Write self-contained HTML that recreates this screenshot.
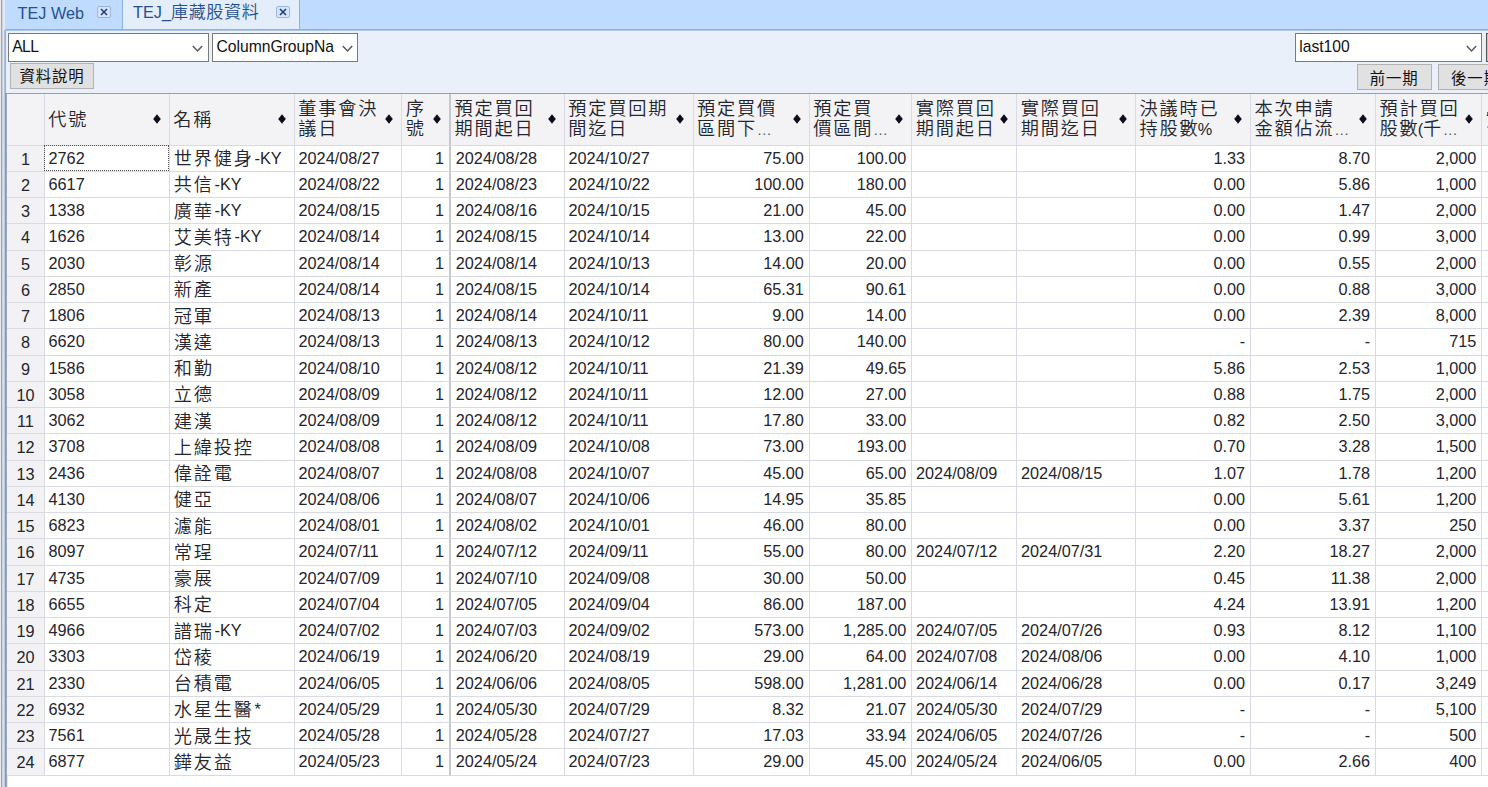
<!DOCTYPE html><html><head><meta charset="utf-8"><title>TEJ</title><style>

html,body{margin:0;padding:0;}
body{width:1488px;height:787px;overflow:hidden;background:#fff;position:relative;font-family:"Liberation Sans", "Noto Sans CJK TC", sans-serif;font-size:16.25px;color:#25252d;}
div{box-sizing:border-box;}
.abs{position:absolute;}
.c{font-family:"Liberation Sans", "Noto Sans CJK TC", sans-serif;font-size:18.2px;letter-spacing:1.8px;}
.cell{position:absolute;height:26.25px;line-height:24.5px;white-space:nowrap;overflow:hidden;border-right:1.25px solid #d9dae3;border-bottom:1.25px solid #d9dae3;background:#fff;padding:0 5px 0 3.7px;}
.cell .c{line-height:20px;position:relative;top:1.7px;margin-left:0.3px;margin-right:0.7px;font-weight:350;}
.r{text-align:right;}
.rh{background:#f2f2f5;text-align:center;padding:1px 0 0 0;}
.hd{position:absolute;background:#f3f3f6;border-right:1.25px solid #d9dae3;border-bottom:1.25px solid #d9dae3;overflow:hidden;}
.hd .t{position:absolute;left:3.4px;top:50%;margin-top:-0.6px;transform:translateY(-50%);line-height:20px;font-size:16.25px;white-space:nowrap;}
.hd .t .c{font-weight:350;font-size:18.2px;letter-spacing:1.8px;position:relative;top:0.4px;margin-right:-1.8px;}
.e{font-size:15px;margin-left:1.5px;color:#555;}
.hd svg{position:absolute;right:8.3px;top:50%;margin-top:-5px;}
.sel{position:absolute;background:#fff;border:1.25px solid #7a7a7a;height:29px;line-height:25.5px;padding-left:3.2px;font-size:15.7px;color:#111;}
.sel svg{position:absolute;right:4.5px;top:10.8px;}
.btn{position:absolute;background:#e1e1e1;border:1.25px solid #b2b2b2;height:25.5px;line-height:26.5px;text-align:center;font-size:15.4px;letter-spacing:0.9px;color:#111;white-space:nowrap;overflow:hidden;}
.tab{position:absolute;top:0;height:29px;line-height:24px;color:#27508f;font-size:16.25px;white-space:nowrap;}
.tab .c{font-size:17px;letter-spacing:0.7px;font-weight:350;}
.x{position:absolute;top:5.6px;width:14.2px;height:12.9px;border:1.25px solid #9db7e0;border-radius:2px;background:#d6e4fb;}
.x svg{position:absolute;left:2.2px;top:1.6px;}

</style></head><body>
<div class="abs" style="left:0px;top:0;width:1px;height:787px;background:#e6ebf0"></div>
<div class="abs" style="left:1px;top:0;width:1px;height:787px;background:#a1a3a9"></div>
<div class="abs" style="left:2px;top:0;width:1px;height:787px;background:#d0d1d9"></div>
<div class="abs" style="left:3px;top:0;width:1px;height:787px;background:#e3e6f0"></div>
<div class="abs" style="left:4px;top:0;width:1px;height:787px;background:#e6e8f0"></div>
<div class="abs" style="left:5px;top:0;width:1483px;height:29px;background:#bfdbff"></div>
<div class="abs" style="left:5px;top:31px;width:1483px;height:63px;background:linear-gradient(#e6f2fc 0px,#e9f0f9 3px)"></div>
<div class="abs" style="left:3px;top:30px;width:1px;height:63px;background:#dbe1ee"></div>
<div class="abs" style="left:4px;top:30px;width:1px;height:63px;background:#b3c5e2"></div>
<div class="abs" style="left:5px;top:30px;width:1px;height:63px;background:#93adcf"></div>
<div class="abs" style="left:6px;top:30px;width:1px;height:63px;background:#e3f0fc"></div>
<div class="abs" style="left:3px;top:93px;width:1px;height:694px;background:#d8dfee"></div>
<div class="abs" style="left:4px;top:93px;width:1px;height:694px;background:#b9cbe6"></div>
<div class="abs" style="left:5px;top:93px;width:1px;height:694px;background:#8298b6"></div>
<div class="abs" style="left:6px;top:93px;width:1px;height:694px;background:#a0a9bd"></div>
<div class="abs" style="left:7px;top:93px;width:1px;height:694px;background:#e4e5eb"></div>
<div class="tab" style="left:5px;width:117.5px;border-right:1.25px solid #8db2e3"><span style="position:absolute;left:12.5px;top:1px">TEJ Web</span><div class="x" style="left:92.3px"><svg width="8" height="8" viewBox="0 0 8 8"><path d="M1 1L7 7M7 1L1 7" stroke="#1f3f86" stroke-width="1.6" fill="none"/></svg></div></div>
<div class="tab" style="left:122.5px;width:177px;background:#e4edfa;border-right:1.25px solid #8db2e3"><span style="position:absolute;left:10.5px">TEJ_<span class="c">庫藏股資料</span></span><div class="x" style="left:153px"><svg width="8" height="8" viewBox="0 0 8 8"><path d="M1 1L7 7M7 1L1 7" stroke="#1f3f86" stroke-width="1.6" fill="none"/></svg></div></div>
<div class="abs" style="left:5px;top:29px;width:1483px;height:1px;background:#93b0d8"></div><div class="abs" style="left:5px;top:30px;width:1483px;height:1px;background:#aec4e0"></div>
<div class="sel" style="left:8px;top:33px;width:200.5px"><span style="letter-spacing:-0.6px">ALL</span><svg width="11" height="8" viewBox="0 0 11 8"><path d="M0.8 1L5.5 6L10.2 1" stroke="#5a5a5a" stroke-width="1.5" fill="none"/></svg></div>
<div class="sel" style="left:212.2px;top:33px;width:146.3px">ColumnGroupNa<svg width="11" height="8" viewBox="0 0 11 8"><path d="M0.8 1L5.5 6L10.2 1" stroke="#5a5a5a" stroke-width="1.5" fill="none"/></svg></div>
<div class="sel" style="left:1295px;top:33px;width:187.3px">last100<svg width="11" height="8" viewBox="0 0 11 8"><path d="M0.8 1L5.5 6L10.2 1" stroke="#5a5a5a" stroke-width="1.5" fill="none"/></svg></div>
<div class="abs" style="left:1485.5px;top:32.8px;width:10px;height:29px;border:1.25px solid #555;background:#c4c4cb"></div>
<div class="btn" style="left:9.8px;top:63.2px;width:84.4px">資料說明</div>
<div class="btn" style="left:1356.5px;top:64.4px;width:75.3px;height:25.8px;line-height:27px">前一期</div>
<div class="btn" style="left:1437.5px;top:64.4px;width:76px;height:25.8px;line-height:27px">後一期</div>
<div class="abs" style="left:6.25px;top:92.6px;width:1482px;height:1.25px;background:#9c9ea6"></div>
<div class="hd" style="left:7.00px;top:93.75px;width:37.85px;height:51.75px"></div>
<div class="hd" style="left:44.85px;top:93.75px;width:125.00px;height:51.75px;"><div class="t" style="margin-top:0.6px"><span class="c">代號</span></div><svg width="8" height="10" viewBox="0 0 8 10"><polygon points="4,0.3 7.8,5 4,9.7 0.2,5" fill="#0b0b1a"/></svg></div>
<div class="hd" style="left:169.85px;top:93.75px;width:125.00px;height:51.75px;"><div class="t" style="margin-top:0.6px"><span class="c">名稱</span></div><svg width="8" height="10" viewBox="0 0 8 10"><polygon points="4,0.3 7.8,5 4,9.7 0.2,5" fill="#0b0b1a"/></svg></div>
<div class="hd" style="left:294.85px;top:93.75px;width:107.50px;height:51.75px;"><div class="t"><span class="c">董事會決</span><br><span class="c">議日</span></div><svg width="8" height="10" viewBox="0 0 8 10"><polygon points="4,0.3 7.8,5 4,9.7 0.2,5" fill="#0b0b1a"/></svg></div>
<div class="hd" style="left:402.35px;top:93.75px;width:48.75px;height:51.75px;border-right:2.5px solid #c6c7cf;"><div class="t"><span class="c">序</span><br><span class="c">號</span></div><svg width="8" height="10" viewBox="0 0 8 10"><polygon points="4,0.3 7.8,5 4,9.7 0.2,5" fill="#0b0b1a"/></svg></div>
<div class="hd" style="left:451.10px;top:93.75px;width:113.75px;height:51.75px;"><div class="t"><span class="c">預定買回</span><br><span class="c">期間起日</span></div><svg width="8" height="10" viewBox="0 0 8 10"><polygon points="4,0.3 7.8,5 4,9.7 0.2,5" fill="#0b0b1a"/></svg></div>
<div class="hd" style="left:564.85px;top:93.75px;width:128.75px;height:51.75px;"><div class="t"><span class="c">預定買回期</span><br><span class="c">間迄日</span></div><svg width="8" height="10" viewBox="0 0 8 10"><polygon points="4,0.3 7.8,5 4,9.7 0.2,5" fill="#0b0b1a"/></svg></div>
<div class="hd" style="left:693.60px;top:93.75px;width:116.25px;height:51.75px;"><div class="t"><span class="c">預定買價</span><br><span class="c">區間下</span><span class="e">…</span></div><svg width="8" height="10" viewBox="0 0 8 10"><polygon points="4,0.3 7.8,5 4,9.7 0.2,5" fill="#0b0b1a"/></svg></div>
<div class="hd" style="left:809.85px;top:93.75px;width:102.50px;height:51.75px;"><div class="t"><span class="c">預定買</span><br><span class="c">價區間</span><span class="e">…</span></div><svg width="8" height="10" viewBox="0 0 8 10"><polygon points="4,0.3 7.8,5 4,9.7 0.2,5" fill="#0b0b1a"/></svg></div>
<div class="hd" style="left:912.35px;top:93.75px;width:105.00px;height:51.75px;"><div class="t"><span class="c">實際買回</span><br><span class="c">期間起日</span></div><svg width="8" height="10" viewBox="0 0 8 10"><polygon points="4,0.3 7.8,5 4,9.7 0.2,5" fill="#0b0b1a"/></svg></div>
<div class="hd" style="left:1017.35px;top:93.75px;width:118.75px;height:51.75px;"><div class="t"><span class="c">實際買回</span><br><span class="c">期間迄日</span></div><svg width="8" height="10" viewBox="0 0 8 10"><polygon points="4,0.3 7.8,5 4,9.7 0.2,5" fill="#0b0b1a"/></svg></div>
<div class="hd" style="left:1136.10px;top:93.75px;width:115.00px;height:51.75px;"><div class="t"><span class="c">決議時已</span><br><span class="c">持股數</span>%</div><svg width="8" height="10" viewBox="0 0 8 10"><polygon points="4,0.3 7.8,5 4,9.7 0.2,5" fill="#0b0b1a"/></svg></div>
<div class="hd" style="left:1251.10px;top:93.75px;width:125.00px;height:51.75px;"><div class="t"><span class="c">本次申請</span><br><span class="c">金額佔流</span><span class="e">…</span></div><svg width="8" height="10" viewBox="0 0 8 10"><polygon points="4,0.3 7.8,5 4,9.7 0.2,5" fill="#0b0b1a"/></svg></div>
<div class="hd" style="left:1376.10px;top:93.75px;width:106.25px;height:51.75px;"><div class="t"><span class="c">預計買回</span><br><span class="c">股數</span>(<span class="c">千</span><span class="e">…</span></div><svg width="8" height="10" viewBox="0 0 8 10"><polygon points="4,0.3 7.8,5 4,9.7 0.2,5" fill="#0b0b1a"/></svg></div>
<div class="hd" style="left:1482.35px;top:93.75px;width:131.25px;height:51.75px;"><div class="t" style="margin-top:0.6px"><span class="c">實</span></div><svg width="8" height="10" viewBox="0 0 8 10"><polygon points="4,0.3 7.8,5 4,9.7 0.2,5" fill="#0b0b1a"/></svg></div>
<div class="cell rh" style="left:7.00px;top:145.50px;width:37.85px">1</div>
<div class="cell" style="left:44.85px;top:145.50px;width:125.00px;">2762</div>
<div class="cell" style="left:169.85px;top:145.50px;width:125.00px;"><span class="c">世界健身</span>-KY</div>
<div class="cell" style="left:294.85px;top:145.50px;width:107.50px;">2024/08/27</div>
<div class="cell r" style="left:402.35px;top:145.50px;width:48.75px;border-right:2.5px solid #c6c7cf;">1</div>
<div class="cell" style="left:451.10px;top:145.50px;width:113.75px;padding-left:4.7px;">2024/08/28</div>
<div class="cell" style="left:564.85px;top:145.50px;width:128.75px;">2024/10/27</div>
<div class="cell r" style="left:693.60px;top:145.50px;width:116.25px;">75.00</div>
<div class="cell r" style="left:809.85px;top:145.50px;width:102.50px;">100.00</div>
<div class="cell" style="left:912.35px;top:145.50px;width:105.00px;"></div>
<div class="cell" style="left:1017.35px;top:145.50px;width:118.75px;"></div>
<div class="cell r" style="left:1136.10px;top:145.50px;width:115.00px;">1.33</div>
<div class="cell r" style="left:1251.10px;top:145.50px;width:125.00px;">8.70</div>
<div class="cell r" style="left:1376.10px;top:145.50px;width:106.25px;">2,000</div>
<div class="cell" style="left:1482.35px;top:145.50px;width:100.00px"></div>
<div class="cell rh" style="left:7.00px;top:171.75px;width:37.85px">2</div>
<div class="cell" style="left:44.85px;top:171.75px;width:125.00px;">6617</div>
<div class="cell" style="left:169.85px;top:171.75px;width:125.00px;"><span class="c">共信</span>-KY</div>
<div class="cell" style="left:294.85px;top:171.75px;width:107.50px;">2024/08/22</div>
<div class="cell r" style="left:402.35px;top:171.75px;width:48.75px;border-right:2.5px solid #c6c7cf;">1</div>
<div class="cell" style="left:451.10px;top:171.75px;width:113.75px;padding-left:4.7px;">2024/08/23</div>
<div class="cell" style="left:564.85px;top:171.75px;width:128.75px;">2024/10/22</div>
<div class="cell r" style="left:693.60px;top:171.75px;width:116.25px;">100.00</div>
<div class="cell r" style="left:809.85px;top:171.75px;width:102.50px;">180.00</div>
<div class="cell" style="left:912.35px;top:171.75px;width:105.00px;"></div>
<div class="cell" style="left:1017.35px;top:171.75px;width:118.75px;"></div>
<div class="cell r" style="left:1136.10px;top:171.75px;width:115.00px;">0.00</div>
<div class="cell r" style="left:1251.10px;top:171.75px;width:125.00px;">5.86</div>
<div class="cell r" style="left:1376.10px;top:171.75px;width:106.25px;">1,000</div>
<div class="cell" style="left:1482.35px;top:171.75px;width:100.00px"></div>
<div class="cell rh" style="left:7.00px;top:198.00px;width:37.85px">3</div>
<div class="cell" style="left:44.85px;top:198.00px;width:125.00px;">1338</div>
<div class="cell" style="left:169.85px;top:198.00px;width:125.00px;"><span class="c">廣華</span>-KY</div>
<div class="cell" style="left:294.85px;top:198.00px;width:107.50px;">2024/08/15</div>
<div class="cell r" style="left:402.35px;top:198.00px;width:48.75px;border-right:2.5px solid #c6c7cf;">1</div>
<div class="cell" style="left:451.10px;top:198.00px;width:113.75px;padding-left:4.7px;">2024/08/16</div>
<div class="cell" style="left:564.85px;top:198.00px;width:128.75px;">2024/10/15</div>
<div class="cell r" style="left:693.60px;top:198.00px;width:116.25px;">21.00</div>
<div class="cell r" style="left:809.85px;top:198.00px;width:102.50px;">45.00</div>
<div class="cell" style="left:912.35px;top:198.00px;width:105.00px;"></div>
<div class="cell" style="left:1017.35px;top:198.00px;width:118.75px;"></div>
<div class="cell r" style="left:1136.10px;top:198.00px;width:115.00px;">0.00</div>
<div class="cell r" style="left:1251.10px;top:198.00px;width:125.00px;">1.47</div>
<div class="cell r" style="left:1376.10px;top:198.00px;width:106.25px;">2,000</div>
<div class="cell" style="left:1482.35px;top:198.00px;width:100.00px"></div>
<div class="cell rh" style="left:7.00px;top:224.25px;width:37.85px">4</div>
<div class="cell" style="left:44.85px;top:224.25px;width:125.00px;">1626</div>
<div class="cell" style="left:169.85px;top:224.25px;width:125.00px;"><span class="c">艾美特</span>-KY</div>
<div class="cell" style="left:294.85px;top:224.25px;width:107.50px;">2024/08/14</div>
<div class="cell r" style="left:402.35px;top:224.25px;width:48.75px;border-right:2.5px solid #c6c7cf;">1</div>
<div class="cell" style="left:451.10px;top:224.25px;width:113.75px;padding-left:4.7px;">2024/08/15</div>
<div class="cell" style="left:564.85px;top:224.25px;width:128.75px;">2024/10/14</div>
<div class="cell r" style="left:693.60px;top:224.25px;width:116.25px;">13.00</div>
<div class="cell r" style="left:809.85px;top:224.25px;width:102.50px;">22.00</div>
<div class="cell" style="left:912.35px;top:224.25px;width:105.00px;"></div>
<div class="cell" style="left:1017.35px;top:224.25px;width:118.75px;"></div>
<div class="cell r" style="left:1136.10px;top:224.25px;width:115.00px;">0.00</div>
<div class="cell r" style="left:1251.10px;top:224.25px;width:125.00px;">0.99</div>
<div class="cell r" style="left:1376.10px;top:224.25px;width:106.25px;">3,000</div>
<div class="cell" style="left:1482.35px;top:224.25px;width:100.00px"></div>
<div class="cell rh" style="left:7.00px;top:250.50px;width:37.85px">5</div>
<div class="cell" style="left:44.85px;top:250.50px;width:125.00px;">2030</div>
<div class="cell" style="left:169.85px;top:250.50px;width:125.00px;"><span class="c">彰源</span></div>
<div class="cell" style="left:294.85px;top:250.50px;width:107.50px;">2024/08/14</div>
<div class="cell r" style="left:402.35px;top:250.50px;width:48.75px;border-right:2.5px solid #c6c7cf;">1</div>
<div class="cell" style="left:451.10px;top:250.50px;width:113.75px;padding-left:4.7px;">2024/08/14</div>
<div class="cell" style="left:564.85px;top:250.50px;width:128.75px;">2024/10/13</div>
<div class="cell r" style="left:693.60px;top:250.50px;width:116.25px;">14.00</div>
<div class="cell r" style="left:809.85px;top:250.50px;width:102.50px;">20.00</div>
<div class="cell" style="left:912.35px;top:250.50px;width:105.00px;"></div>
<div class="cell" style="left:1017.35px;top:250.50px;width:118.75px;"></div>
<div class="cell r" style="left:1136.10px;top:250.50px;width:115.00px;">0.00</div>
<div class="cell r" style="left:1251.10px;top:250.50px;width:125.00px;">0.55</div>
<div class="cell r" style="left:1376.10px;top:250.50px;width:106.25px;">2,000</div>
<div class="cell" style="left:1482.35px;top:250.50px;width:100.00px"></div>
<div class="cell rh" style="left:7.00px;top:276.75px;width:37.85px">6</div>
<div class="cell" style="left:44.85px;top:276.75px;width:125.00px;">2850</div>
<div class="cell" style="left:169.85px;top:276.75px;width:125.00px;"><span class="c">新產</span></div>
<div class="cell" style="left:294.85px;top:276.75px;width:107.50px;">2024/08/14</div>
<div class="cell r" style="left:402.35px;top:276.75px;width:48.75px;border-right:2.5px solid #c6c7cf;">1</div>
<div class="cell" style="left:451.10px;top:276.75px;width:113.75px;padding-left:4.7px;">2024/08/15</div>
<div class="cell" style="left:564.85px;top:276.75px;width:128.75px;">2024/10/14</div>
<div class="cell r" style="left:693.60px;top:276.75px;width:116.25px;">65.31</div>
<div class="cell r" style="left:809.85px;top:276.75px;width:102.50px;">90.61</div>
<div class="cell" style="left:912.35px;top:276.75px;width:105.00px;"></div>
<div class="cell" style="left:1017.35px;top:276.75px;width:118.75px;"></div>
<div class="cell r" style="left:1136.10px;top:276.75px;width:115.00px;">0.00</div>
<div class="cell r" style="left:1251.10px;top:276.75px;width:125.00px;">0.88</div>
<div class="cell r" style="left:1376.10px;top:276.75px;width:106.25px;">3,000</div>
<div class="cell" style="left:1482.35px;top:276.75px;width:100.00px"></div>
<div class="cell rh" style="left:7.00px;top:303.00px;width:37.85px">7</div>
<div class="cell" style="left:44.85px;top:303.00px;width:125.00px;">1806</div>
<div class="cell" style="left:169.85px;top:303.00px;width:125.00px;"><span class="c">冠軍</span></div>
<div class="cell" style="left:294.85px;top:303.00px;width:107.50px;">2024/08/13</div>
<div class="cell r" style="left:402.35px;top:303.00px;width:48.75px;border-right:2.5px solid #c6c7cf;">1</div>
<div class="cell" style="left:451.10px;top:303.00px;width:113.75px;padding-left:4.7px;">2024/08/14</div>
<div class="cell" style="left:564.85px;top:303.00px;width:128.75px;">2024/10/11</div>
<div class="cell r" style="left:693.60px;top:303.00px;width:116.25px;">9.00</div>
<div class="cell r" style="left:809.85px;top:303.00px;width:102.50px;">14.00</div>
<div class="cell" style="left:912.35px;top:303.00px;width:105.00px;"></div>
<div class="cell" style="left:1017.35px;top:303.00px;width:118.75px;"></div>
<div class="cell r" style="left:1136.10px;top:303.00px;width:115.00px;">0.00</div>
<div class="cell r" style="left:1251.10px;top:303.00px;width:125.00px;">2.39</div>
<div class="cell r" style="left:1376.10px;top:303.00px;width:106.25px;">8,000</div>
<div class="cell" style="left:1482.35px;top:303.00px;width:100.00px"></div>
<div class="cell rh" style="left:7.00px;top:329.25px;width:37.85px">8</div>
<div class="cell" style="left:44.85px;top:329.25px;width:125.00px;">6620</div>
<div class="cell" style="left:169.85px;top:329.25px;width:125.00px;"><span class="c">漢達</span></div>
<div class="cell" style="left:294.85px;top:329.25px;width:107.50px;">2024/08/13</div>
<div class="cell r" style="left:402.35px;top:329.25px;width:48.75px;border-right:2.5px solid #c6c7cf;">1</div>
<div class="cell" style="left:451.10px;top:329.25px;width:113.75px;padding-left:4.7px;">2024/08/13</div>
<div class="cell" style="left:564.85px;top:329.25px;width:128.75px;">2024/10/12</div>
<div class="cell r" style="left:693.60px;top:329.25px;width:116.25px;">80.00</div>
<div class="cell r" style="left:809.85px;top:329.25px;width:102.50px;">140.00</div>
<div class="cell" style="left:912.35px;top:329.25px;width:105.00px;"></div>
<div class="cell" style="left:1017.35px;top:329.25px;width:118.75px;"></div>
<div class="cell r" style="left:1136.10px;top:329.25px;width:115.00px;">-</div>
<div class="cell r" style="left:1251.10px;top:329.25px;width:125.00px;">-</div>
<div class="cell r" style="left:1376.10px;top:329.25px;width:106.25px;">715</div>
<div class="cell" style="left:1482.35px;top:329.25px;width:100.00px"></div>
<div class="cell rh" style="left:7.00px;top:355.50px;width:37.85px">9</div>
<div class="cell" style="left:44.85px;top:355.50px;width:125.00px;">1586</div>
<div class="cell" style="left:169.85px;top:355.50px;width:125.00px;"><span class="c">和勤</span></div>
<div class="cell" style="left:294.85px;top:355.50px;width:107.50px;">2024/08/10</div>
<div class="cell r" style="left:402.35px;top:355.50px;width:48.75px;border-right:2.5px solid #c6c7cf;">1</div>
<div class="cell" style="left:451.10px;top:355.50px;width:113.75px;padding-left:4.7px;">2024/08/12</div>
<div class="cell" style="left:564.85px;top:355.50px;width:128.75px;">2024/10/11</div>
<div class="cell r" style="left:693.60px;top:355.50px;width:116.25px;">21.39</div>
<div class="cell r" style="left:809.85px;top:355.50px;width:102.50px;">49.65</div>
<div class="cell" style="left:912.35px;top:355.50px;width:105.00px;"></div>
<div class="cell" style="left:1017.35px;top:355.50px;width:118.75px;"></div>
<div class="cell r" style="left:1136.10px;top:355.50px;width:115.00px;">5.86</div>
<div class="cell r" style="left:1251.10px;top:355.50px;width:125.00px;">2.53</div>
<div class="cell r" style="left:1376.10px;top:355.50px;width:106.25px;">1,000</div>
<div class="cell" style="left:1482.35px;top:355.50px;width:100.00px"></div>
<div class="cell rh" style="left:7.00px;top:381.75px;width:37.85px">10</div>
<div class="cell" style="left:44.85px;top:381.75px;width:125.00px;">3058</div>
<div class="cell" style="left:169.85px;top:381.75px;width:125.00px;"><span class="c">立德</span></div>
<div class="cell" style="left:294.85px;top:381.75px;width:107.50px;">2024/08/09</div>
<div class="cell r" style="left:402.35px;top:381.75px;width:48.75px;border-right:2.5px solid #c6c7cf;">1</div>
<div class="cell" style="left:451.10px;top:381.75px;width:113.75px;padding-left:4.7px;">2024/08/12</div>
<div class="cell" style="left:564.85px;top:381.75px;width:128.75px;">2024/10/11</div>
<div class="cell r" style="left:693.60px;top:381.75px;width:116.25px;">12.00</div>
<div class="cell r" style="left:809.85px;top:381.75px;width:102.50px;">27.00</div>
<div class="cell" style="left:912.35px;top:381.75px;width:105.00px;"></div>
<div class="cell" style="left:1017.35px;top:381.75px;width:118.75px;"></div>
<div class="cell r" style="left:1136.10px;top:381.75px;width:115.00px;">0.88</div>
<div class="cell r" style="left:1251.10px;top:381.75px;width:125.00px;">1.75</div>
<div class="cell r" style="left:1376.10px;top:381.75px;width:106.25px;">2,000</div>
<div class="cell" style="left:1482.35px;top:381.75px;width:100.00px"></div>
<div class="cell rh" style="left:7.00px;top:408.00px;width:37.85px">11</div>
<div class="cell" style="left:44.85px;top:408.00px;width:125.00px;">3062</div>
<div class="cell" style="left:169.85px;top:408.00px;width:125.00px;"><span class="c">建漢</span></div>
<div class="cell" style="left:294.85px;top:408.00px;width:107.50px;">2024/08/09</div>
<div class="cell r" style="left:402.35px;top:408.00px;width:48.75px;border-right:2.5px solid #c6c7cf;">1</div>
<div class="cell" style="left:451.10px;top:408.00px;width:113.75px;padding-left:4.7px;">2024/08/12</div>
<div class="cell" style="left:564.85px;top:408.00px;width:128.75px;">2024/10/11</div>
<div class="cell r" style="left:693.60px;top:408.00px;width:116.25px;">17.80</div>
<div class="cell r" style="left:809.85px;top:408.00px;width:102.50px;">33.00</div>
<div class="cell" style="left:912.35px;top:408.00px;width:105.00px;"></div>
<div class="cell" style="left:1017.35px;top:408.00px;width:118.75px;"></div>
<div class="cell r" style="left:1136.10px;top:408.00px;width:115.00px;">0.82</div>
<div class="cell r" style="left:1251.10px;top:408.00px;width:125.00px;">2.50</div>
<div class="cell r" style="left:1376.10px;top:408.00px;width:106.25px;">3,000</div>
<div class="cell" style="left:1482.35px;top:408.00px;width:100.00px"></div>
<div class="cell rh" style="left:7.00px;top:434.25px;width:37.85px">12</div>
<div class="cell" style="left:44.85px;top:434.25px;width:125.00px;">3708</div>
<div class="cell" style="left:169.85px;top:434.25px;width:125.00px;"><span class="c">上緯投控</span></div>
<div class="cell" style="left:294.85px;top:434.25px;width:107.50px;">2024/08/08</div>
<div class="cell r" style="left:402.35px;top:434.25px;width:48.75px;border-right:2.5px solid #c6c7cf;">1</div>
<div class="cell" style="left:451.10px;top:434.25px;width:113.75px;padding-left:4.7px;">2024/08/09</div>
<div class="cell" style="left:564.85px;top:434.25px;width:128.75px;">2024/10/08</div>
<div class="cell r" style="left:693.60px;top:434.25px;width:116.25px;">73.00</div>
<div class="cell r" style="left:809.85px;top:434.25px;width:102.50px;">193.00</div>
<div class="cell" style="left:912.35px;top:434.25px;width:105.00px;"></div>
<div class="cell" style="left:1017.35px;top:434.25px;width:118.75px;"></div>
<div class="cell r" style="left:1136.10px;top:434.25px;width:115.00px;">0.70</div>
<div class="cell r" style="left:1251.10px;top:434.25px;width:125.00px;">3.28</div>
<div class="cell r" style="left:1376.10px;top:434.25px;width:106.25px;">1,500</div>
<div class="cell" style="left:1482.35px;top:434.25px;width:100.00px"></div>
<div class="cell rh" style="left:7.00px;top:460.50px;width:37.85px">13</div>
<div class="cell" style="left:44.85px;top:460.50px;width:125.00px;">2436</div>
<div class="cell" style="left:169.85px;top:460.50px;width:125.00px;"><span class="c">偉詮電</span></div>
<div class="cell" style="left:294.85px;top:460.50px;width:107.50px;">2024/08/07</div>
<div class="cell r" style="left:402.35px;top:460.50px;width:48.75px;border-right:2.5px solid #c6c7cf;">1</div>
<div class="cell" style="left:451.10px;top:460.50px;width:113.75px;padding-left:4.7px;">2024/08/08</div>
<div class="cell" style="left:564.85px;top:460.50px;width:128.75px;">2024/10/07</div>
<div class="cell r" style="left:693.60px;top:460.50px;width:116.25px;">45.00</div>
<div class="cell r" style="left:809.85px;top:460.50px;width:102.50px;">65.00</div>
<div class="cell" style="left:912.35px;top:460.50px;width:105.00px;">2024/08/09</div>
<div class="cell" style="left:1017.35px;top:460.50px;width:118.75px;">2024/08/15</div>
<div class="cell r" style="left:1136.10px;top:460.50px;width:115.00px;">1.07</div>
<div class="cell r" style="left:1251.10px;top:460.50px;width:125.00px;">1.78</div>
<div class="cell r" style="left:1376.10px;top:460.50px;width:106.25px;">1,200</div>
<div class="cell" style="left:1482.35px;top:460.50px;width:100.00px"></div>
<div class="cell rh" style="left:7.00px;top:486.75px;width:37.85px">14</div>
<div class="cell" style="left:44.85px;top:486.75px;width:125.00px;">4130</div>
<div class="cell" style="left:169.85px;top:486.75px;width:125.00px;"><span class="c">健亞</span></div>
<div class="cell" style="left:294.85px;top:486.75px;width:107.50px;">2024/08/06</div>
<div class="cell r" style="left:402.35px;top:486.75px;width:48.75px;border-right:2.5px solid #c6c7cf;">1</div>
<div class="cell" style="left:451.10px;top:486.75px;width:113.75px;padding-left:4.7px;">2024/08/07</div>
<div class="cell" style="left:564.85px;top:486.75px;width:128.75px;">2024/10/06</div>
<div class="cell r" style="left:693.60px;top:486.75px;width:116.25px;">14.95</div>
<div class="cell r" style="left:809.85px;top:486.75px;width:102.50px;">35.85</div>
<div class="cell" style="left:912.35px;top:486.75px;width:105.00px;"></div>
<div class="cell" style="left:1017.35px;top:486.75px;width:118.75px;"></div>
<div class="cell r" style="left:1136.10px;top:486.75px;width:115.00px;">0.00</div>
<div class="cell r" style="left:1251.10px;top:486.75px;width:125.00px;">5.61</div>
<div class="cell r" style="left:1376.10px;top:486.75px;width:106.25px;">1,200</div>
<div class="cell" style="left:1482.35px;top:486.75px;width:100.00px"></div>
<div class="cell rh" style="left:7.00px;top:513.00px;width:37.85px">15</div>
<div class="cell" style="left:44.85px;top:513.00px;width:125.00px;">6823</div>
<div class="cell" style="left:169.85px;top:513.00px;width:125.00px;"><span class="c">濾能</span></div>
<div class="cell" style="left:294.85px;top:513.00px;width:107.50px;">2024/08/01</div>
<div class="cell r" style="left:402.35px;top:513.00px;width:48.75px;border-right:2.5px solid #c6c7cf;">1</div>
<div class="cell" style="left:451.10px;top:513.00px;width:113.75px;padding-left:4.7px;">2024/08/02</div>
<div class="cell" style="left:564.85px;top:513.00px;width:128.75px;">2024/10/01</div>
<div class="cell r" style="left:693.60px;top:513.00px;width:116.25px;">46.00</div>
<div class="cell r" style="left:809.85px;top:513.00px;width:102.50px;">80.00</div>
<div class="cell" style="left:912.35px;top:513.00px;width:105.00px;"></div>
<div class="cell" style="left:1017.35px;top:513.00px;width:118.75px;"></div>
<div class="cell r" style="left:1136.10px;top:513.00px;width:115.00px;">0.00</div>
<div class="cell r" style="left:1251.10px;top:513.00px;width:125.00px;">3.37</div>
<div class="cell r" style="left:1376.10px;top:513.00px;width:106.25px;">250</div>
<div class="cell" style="left:1482.35px;top:513.00px;width:100.00px"></div>
<div class="cell rh" style="left:7.00px;top:539.25px;width:37.85px">16</div>
<div class="cell" style="left:44.85px;top:539.25px;width:125.00px;">8097</div>
<div class="cell" style="left:169.85px;top:539.25px;width:125.00px;"><span class="c">常珵</span></div>
<div class="cell" style="left:294.85px;top:539.25px;width:107.50px;">2024/07/11</div>
<div class="cell r" style="left:402.35px;top:539.25px;width:48.75px;border-right:2.5px solid #c6c7cf;">1</div>
<div class="cell" style="left:451.10px;top:539.25px;width:113.75px;padding-left:4.7px;">2024/07/12</div>
<div class="cell" style="left:564.85px;top:539.25px;width:128.75px;">2024/09/11</div>
<div class="cell r" style="left:693.60px;top:539.25px;width:116.25px;">55.00</div>
<div class="cell r" style="left:809.85px;top:539.25px;width:102.50px;">80.00</div>
<div class="cell" style="left:912.35px;top:539.25px;width:105.00px;">2024/07/12</div>
<div class="cell" style="left:1017.35px;top:539.25px;width:118.75px;">2024/07/31</div>
<div class="cell r" style="left:1136.10px;top:539.25px;width:115.00px;">2.20</div>
<div class="cell r" style="left:1251.10px;top:539.25px;width:125.00px;">18.27</div>
<div class="cell r" style="left:1376.10px;top:539.25px;width:106.25px;">2,000</div>
<div class="cell" style="left:1482.35px;top:539.25px;width:100.00px"></div>
<div class="cell rh" style="left:7.00px;top:565.50px;width:37.85px">17</div>
<div class="cell" style="left:44.85px;top:565.50px;width:125.00px;">4735</div>
<div class="cell" style="left:169.85px;top:565.50px;width:125.00px;"><span class="c">豪展</span></div>
<div class="cell" style="left:294.85px;top:565.50px;width:107.50px;">2024/07/09</div>
<div class="cell r" style="left:402.35px;top:565.50px;width:48.75px;border-right:2.5px solid #c6c7cf;">1</div>
<div class="cell" style="left:451.10px;top:565.50px;width:113.75px;padding-left:4.7px;">2024/07/10</div>
<div class="cell" style="left:564.85px;top:565.50px;width:128.75px;">2024/09/08</div>
<div class="cell r" style="left:693.60px;top:565.50px;width:116.25px;">30.00</div>
<div class="cell r" style="left:809.85px;top:565.50px;width:102.50px;">50.00</div>
<div class="cell" style="left:912.35px;top:565.50px;width:105.00px;"></div>
<div class="cell" style="left:1017.35px;top:565.50px;width:118.75px;"></div>
<div class="cell r" style="left:1136.10px;top:565.50px;width:115.00px;">0.45</div>
<div class="cell r" style="left:1251.10px;top:565.50px;width:125.00px;">11.38</div>
<div class="cell r" style="left:1376.10px;top:565.50px;width:106.25px;">2,000</div>
<div class="cell" style="left:1482.35px;top:565.50px;width:100.00px"></div>
<div class="cell rh" style="left:7.00px;top:591.75px;width:37.85px">18</div>
<div class="cell" style="left:44.85px;top:591.75px;width:125.00px;">6655</div>
<div class="cell" style="left:169.85px;top:591.75px;width:125.00px;"><span class="c">科定</span></div>
<div class="cell" style="left:294.85px;top:591.75px;width:107.50px;">2024/07/04</div>
<div class="cell r" style="left:402.35px;top:591.75px;width:48.75px;border-right:2.5px solid #c6c7cf;">1</div>
<div class="cell" style="left:451.10px;top:591.75px;width:113.75px;padding-left:4.7px;">2024/07/05</div>
<div class="cell" style="left:564.85px;top:591.75px;width:128.75px;">2024/09/04</div>
<div class="cell r" style="left:693.60px;top:591.75px;width:116.25px;">86.00</div>
<div class="cell r" style="left:809.85px;top:591.75px;width:102.50px;">187.00</div>
<div class="cell" style="left:912.35px;top:591.75px;width:105.00px;"></div>
<div class="cell" style="left:1017.35px;top:591.75px;width:118.75px;"></div>
<div class="cell r" style="left:1136.10px;top:591.75px;width:115.00px;">4.24</div>
<div class="cell r" style="left:1251.10px;top:591.75px;width:125.00px;">13.91</div>
<div class="cell r" style="left:1376.10px;top:591.75px;width:106.25px;">1,200</div>
<div class="cell" style="left:1482.35px;top:591.75px;width:100.00px"></div>
<div class="cell rh" style="left:7.00px;top:618.00px;width:37.85px">19</div>
<div class="cell" style="left:44.85px;top:618.00px;width:125.00px;">4966</div>
<div class="cell" style="left:169.85px;top:618.00px;width:125.00px;"><span class="c">譜瑞</span>-KY</div>
<div class="cell" style="left:294.85px;top:618.00px;width:107.50px;">2024/07/02</div>
<div class="cell r" style="left:402.35px;top:618.00px;width:48.75px;border-right:2.5px solid #c6c7cf;">1</div>
<div class="cell" style="left:451.10px;top:618.00px;width:113.75px;padding-left:4.7px;">2024/07/03</div>
<div class="cell" style="left:564.85px;top:618.00px;width:128.75px;">2024/09/02</div>
<div class="cell r" style="left:693.60px;top:618.00px;width:116.25px;">573.00</div>
<div class="cell r" style="left:809.85px;top:618.00px;width:102.50px;">1,285.00</div>
<div class="cell" style="left:912.35px;top:618.00px;width:105.00px;">2024/07/05</div>
<div class="cell" style="left:1017.35px;top:618.00px;width:118.75px;">2024/07/26</div>
<div class="cell r" style="left:1136.10px;top:618.00px;width:115.00px;">0.93</div>
<div class="cell r" style="left:1251.10px;top:618.00px;width:125.00px;">8.12</div>
<div class="cell r" style="left:1376.10px;top:618.00px;width:106.25px;">1,100</div>
<div class="cell" style="left:1482.35px;top:618.00px;width:100.00px"></div>
<div class="cell rh" style="left:7.00px;top:644.25px;width:37.85px">20</div>
<div class="cell" style="left:44.85px;top:644.25px;width:125.00px;">3303</div>
<div class="cell" style="left:169.85px;top:644.25px;width:125.00px;"><span class="c">岱稜</span></div>
<div class="cell" style="left:294.85px;top:644.25px;width:107.50px;">2024/06/19</div>
<div class="cell r" style="left:402.35px;top:644.25px;width:48.75px;border-right:2.5px solid #c6c7cf;">1</div>
<div class="cell" style="left:451.10px;top:644.25px;width:113.75px;padding-left:4.7px;">2024/06/20</div>
<div class="cell" style="left:564.85px;top:644.25px;width:128.75px;">2024/08/19</div>
<div class="cell r" style="left:693.60px;top:644.25px;width:116.25px;">29.00</div>
<div class="cell r" style="left:809.85px;top:644.25px;width:102.50px;">64.00</div>
<div class="cell" style="left:912.35px;top:644.25px;width:105.00px;">2024/07/08</div>
<div class="cell" style="left:1017.35px;top:644.25px;width:118.75px;">2024/08/06</div>
<div class="cell r" style="left:1136.10px;top:644.25px;width:115.00px;">0.00</div>
<div class="cell r" style="left:1251.10px;top:644.25px;width:125.00px;">4.10</div>
<div class="cell r" style="left:1376.10px;top:644.25px;width:106.25px;">1,000</div>
<div class="cell" style="left:1482.35px;top:644.25px;width:100.00px"></div>
<div class="cell rh" style="left:7.00px;top:670.50px;width:37.85px">21</div>
<div class="cell" style="left:44.85px;top:670.50px;width:125.00px;">2330</div>
<div class="cell" style="left:169.85px;top:670.50px;width:125.00px;"><span class="c">台積電</span></div>
<div class="cell" style="left:294.85px;top:670.50px;width:107.50px;">2024/06/05</div>
<div class="cell r" style="left:402.35px;top:670.50px;width:48.75px;border-right:2.5px solid #c6c7cf;">1</div>
<div class="cell" style="left:451.10px;top:670.50px;width:113.75px;padding-left:4.7px;">2024/06/06</div>
<div class="cell" style="left:564.85px;top:670.50px;width:128.75px;">2024/08/05</div>
<div class="cell r" style="left:693.60px;top:670.50px;width:116.25px;">598.00</div>
<div class="cell r" style="left:809.85px;top:670.50px;width:102.50px;">1,281.00</div>
<div class="cell" style="left:912.35px;top:670.50px;width:105.00px;">2024/06/14</div>
<div class="cell" style="left:1017.35px;top:670.50px;width:118.75px;">2024/06/28</div>
<div class="cell r" style="left:1136.10px;top:670.50px;width:115.00px;">0.00</div>
<div class="cell r" style="left:1251.10px;top:670.50px;width:125.00px;">0.17</div>
<div class="cell r" style="left:1376.10px;top:670.50px;width:106.25px;">3,249</div>
<div class="cell" style="left:1482.35px;top:670.50px;width:100.00px"></div>
<div class="cell rh" style="left:7.00px;top:696.75px;width:37.85px">22</div>
<div class="cell" style="left:44.85px;top:696.75px;width:125.00px;">6932</div>
<div class="cell" style="left:169.85px;top:696.75px;width:125.00px;"><span class="c">水星生醫</span>*</div>
<div class="cell" style="left:294.85px;top:696.75px;width:107.50px;">2024/05/29</div>
<div class="cell r" style="left:402.35px;top:696.75px;width:48.75px;border-right:2.5px solid #c6c7cf;">1</div>
<div class="cell" style="left:451.10px;top:696.75px;width:113.75px;padding-left:4.7px;">2024/05/30</div>
<div class="cell" style="left:564.85px;top:696.75px;width:128.75px;">2024/07/29</div>
<div class="cell r" style="left:693.60px;top:696.75px;width:116.25px;">8.32</div>
<div class="cell r" style="left:809.85px;top:696.75px;width:102.50px;">21.07</div>
<div class="cell" style="left:912.35px;top:696.75px;width:105.00px;">2024/05/30</div>
<div class="cell" style="left:1017.35px;top:696.75px;width:118.75px;">2024/07/29</div>
<div class="cell r" style="left:1136.10px;top:696.75px;width:115.00px;">-</div>
<div class="cell r" style="left:1251.10px;top:696.75px;width:125.00px;">-</div>
<div class="cell r" style="left:1376.10px;top:696.75px;width:106.25px;">5,100</div>
<div class="cell" style="left:1482.35px;top:696.75px;width:100.00px"></div>
<div class="cell rh" style="left:7.00px;top:723.00px;width:37.85px">23</div>
<div class="cell" style="left:44.85px;top:723.00px;width:125.00px;">7561</div>
<div class="cell" style="left:169.85px;top:723.00px;width:125.00px;"><span class="c">光晟生技</span></div>
<div class="cell" style="left:294.85px;top:723.00px;width:107.50px;">2024/05/28</div>
<div class="cell r" style="left:402.35px;top:723.00px;width:48.75px;border-right:2.5px solid #c6c7cf;">1</div>
<div class="cell" style="left:451.10px;top:723.00px;width:113.75px;padding-left:4.7px;">2024/05/28</div>
<div class="cell" style="left:564.85px;top:723.00px;width:128.75px;">2024/07/27</div>
<div class="cell r" style="left:693.60px;top:723.00px;width:116.25px;">17.03</div>
<div class="cell r" style="left:809.85px;top:723.00px;width:102.50px;">33.94</div>
<div class="cell" style="left:912.35px;top:723.00px;width:105.00px;">2024/06/05</div>
<div class="cell" style="left:1017.35px;top:723.00px;width:118.75px;">2024/07/26</div>
<div class="cell r" style="left:1136.10px;top:723.00px;width:115.00px;">-</div>
<div class="cell r" style="left:1251.10px;top:723.00px;width:125.00px;">-</div>
<div class="cell r" style="left:1376.10px;top:723.00px;width:106.25px;">500</div>
<div class="cell" style="left:1482.35px;top:723.00px;width:100.00px"></div>
<div class="cell rh" style="left:7.00px;top:749.25px;width:37.85px">24</div>
<div class="cell" style="left:44.85px;top:749.25px;width:125.00px;">6877</div>
<div class="cell" style="left:169.85px;top:749.25px;width:125.00px;"><span class="c">鏵友益</span></div>
<div class="cell" style="left:294.85px;top:749.25px;width:107.50px;">2024/05/23</div>
<div class="cell r" style="left:402.35px;top:749.25px;width:48.75px;border-right:2.5px solid #c6c7cf;">1</div>
<div class="cell" style="left:451.10px;top:749.25px;width:113.75px;padding-left:4.7px;">2024/05/24</div>
<div class="cell" style="left:564.85px;top:749.25px;width:128.75px;">2024/07/23</div>
<div class="cell r" style="left:693.60px;top:749.25px;width:116.25px;">29.00</div>
<div class="cell r" style="left:809.85px;top:749.25px;width:102.50px;">45.00</div>
<div class="cell" style="left:912.35px;top:749.25px;width:105.00px;">2024/05/24</div>
<div class="cell" style="left:1017.35px;top:749.25px;width:118.75px;">2024/06/05</div>
<div class="cell r" style="left:1136.10px;top:749.25px;width:115.00px;">0.00</div>
<div class="cell r" style="left:1251.10px;top:749.25px;width:125.00px;">2.66</div>
<div class="cell r" style="left:1376.10px;top:749.25px;width:106.25px;">400</div>
<div class="cell" style="left:1482.35px;top:749.25px;width:100.00px"></div>
<div class="abs" style="left:44.20px;top:145.20px;width:124.80px;height:25.75px;border:1.25px dotted #555"></div>
</body></html>
